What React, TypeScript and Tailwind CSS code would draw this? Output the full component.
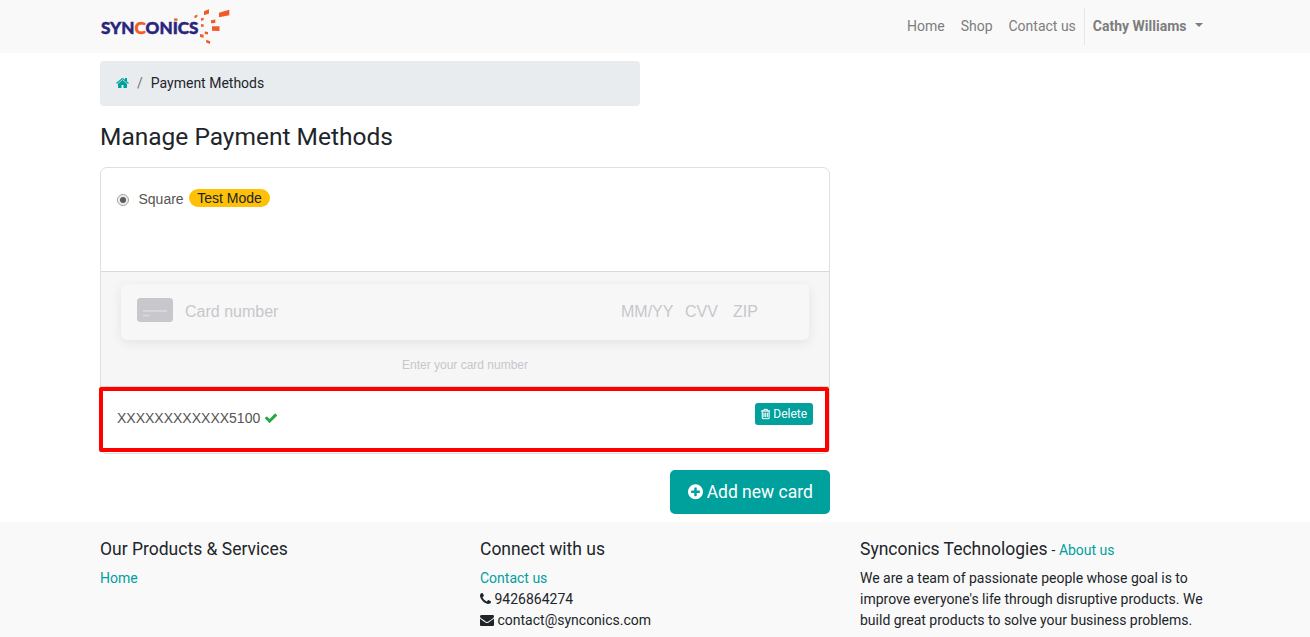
import type { ReactNode } from "react";

const ICONS = {
  home: "M1472 992v480q0 26-19 45t-45 19h-384v-384h-256v384h-384q-26 0-45-19t-19-45v-480q0-1 .5-3t.5-3l575-474 575 474q1 2 1 6zm223-69l-62 74q-8 9-21 11h-3q-13 0-21-7l-692-577-692 577q-12 8-24 7-13-2-21-11l-62-74q-8-10-7-23.5t11-21.5l719-599q32-26 76-26t76 26l244 204v-195q0-14 9-23t23-9h192q14 0 23 9t9 23v408l219 182q10 8 11 21.5t-7 23.5z",
  check: "M1671 566q0 40-28 68l-724 724-136 136q-28 28-68 28t-68-28l-136-136-362-362q-28-28-28-68t28-68l136-136q28-28 68-28t68 28l294 295 656-657q28-28 68-28t68 28l136 136q28 28 28 68z",
  phone: "M1600 1240q0 27-10 70.5t-21 68.5q-21 50-122 106-94 51-186 51-27 0-53-3.5t-57.5-12.5-47-14.5-55.5-20.5-49-18q-98-35-175-83-127-79-264-216t-216-264q-48-77-83-175-3-9-18-49t-20.5-55.5-14.5-47-12.5-57.5-3.5-53q0-92 51-186 56-101 106-122 25-11 68.5-21t70.5-10q14 0 21 3 18 6 53 76 11 19 30 54t35 63.5 31 53.5q3 4 17.5 25t21.5 35.5 7 28.5q0 20-28.5 50t-62 55-62 53-28.5 46q0 9 5 22.5t8.5 20.5 14 24 11.5 19q76 137 174 235t235 174q2 1 19 11.5t24 14 20.5 8.5 22.5 5q18 0 46-28.5t53-62 55-62 50-28.5q14 0 28.5 7t35.5 21.5 25 17.5q25 15 53.5 31t63.5 35 54 30q70 35 76 53 3 7 3 21z",
  envelope: "M1792 710v794q0 66-47 113t-113 47h-1472q-66 0-113-47t-47-113v-794q44 49 101 87 362 246 497 345 57 42 92.5 65.5t94.5 48 110 24.5h2q51 0 110-24.5t94.5-48 92.5-65.5q170-123 498-345 57-39 100-87zm0-294q0 79-49 151t-122 123q-376 261-468 325-10 7-42.5 31t-54 38.5-52 32.5-57.5 27-50 9h-2q-23 0-50-9t-57.5-27-52-32.5-54-38.5-42.5-31q-91-64-262-182.5t-205-142.5q-62-42-117-115.5t-55-136.5q0-78 41.5-130t118.5-52h1472q65 0 112.5 47t47.5 113z",
  plus: "M1344 960v-128q0-26-19-45t-45-19h-256v-256q0-26-19-45t-45-19h-128q-26 0-45 19t-19 45v256h-256q-26 0-45 19t-19 45v128q0 26 19 45t45 19h256v256q0 26 19 45t45 19h128q26 0 45-19t19-45v-256h256q26 0 45-19t19-45zm320-64q0 209-103 385.5t-279.5 279.5-385.5 103-385.5-103-279.5-279.5-103-385.5 103-385.5 279.5-279.5 385.5-103 385.5 103 279.5 279.5 103 385.5z",
  trash: "M704 736v576q0 14-9 23t-23 9h-64q-14 0-23-9t-9-23v-576q0-14 9-23t23-9h64q14 0 23 9t9 23zm256 0v576q0 14-9 23t-23 9h-64q-14 0-23-9t-9-23v-576q0-14 9-23t23-9h64q14 0 23 9t9 23zm256 0v576q0 14-9 23t-23 9h-64q-14 0-23-9t-9-23v-576q0-14 9-23t23-9h64q14 0 23 9t9 23zm128 724v-948h-896v948q0 22 7 40.5t14.5 27 10.5 8.5h832q3 0 10.5-8.5t14.5-27 7-40.5zm-672-1076h448l-48-117q-7-9-17-11h-317q-10 2-17 11zm928 32v64q0 14-9 23t-23 9h-96v948q0 83-47 143.5t-113 60.5h-832q-66 0-113-58.5t-47-141.5v-952h-96q-14 0-23-9t-9-23v-64q0-14 9-23t23-9h309l70-167q15-37 54-63t79-26h320q40 0 79 26t54 63l70 167h309q14 0 23 9t9 23z",
};

function Icon({ name, box = "0 0 1792 1792", className }: { name: keyof typeof ICONS; box?: string; className: string }) {
  return (
    <svg viewBox={box} fill="currentColor" className={className} aria-hidden="true">
      <path d={ICONS[name]} />
    </svg>
  );
}

function Logo() {
  return (
    <svg viewBox="0 0 130 40" className="h-10 w-[130px]" role="img" aria-label="Synconics">
      <text x="1" y="27.300" textLength="97.500" lengthAdjust="spacingAndGlyphs" fontFamily="Lato" fontWeight="900" fontSize="17" fill="#29247c" stroke="#29247c" strokeWidth="0.450">
        SYN<tspan fill="#f15a29" stroke="#f15a29">C</tspan>ONICS
      </text>
      <g fill="#f15a29">
        <path d="M74 11.500h3.600v2.200H74z" />
        <path d="M119 5.800l10.300-3v5.500L119 10.300z" />
        <path d="M104 4.200l5-2v4.400l-5 1.600z" />
        <path d="M94.500 8.800l2.800-1.200v2.400l-2.800 1.200z" />
        <path d="M101 11.300l2.600-.6v2.500l-2.600.5z" />
        <path d="M111 13.200l4.300-.6v3.400l-4.300.3z" />
        <path d="M112 19.300h7.500v4.800l-7.500-.4z" />
        <path d="M101 17.200h2.600v2.600H101z" />
        <path d="M104.700 24.600l3.400.4-.2 2.500-3.200-.4z" />
        <path d="M100 27l3.700.8-.2 2.900-3.500-.8z" />
        <path d="M106.200 32.800l4 1.500-.3 2.600-3.700-1.500z" />
      </g>
    </svg>
  );
}

function FooterColumn({ title, children }: { title: ReactNode; children: ReactNode }) {
  return (
    <div className="px-[15px]">
      <h5 className="mb-2 text-[17.5px] leading-[21px]">{title}</h5>
      {children}
    </div>
  );
}

export default function App() {
  return (
    <div className="flex h-[637px] flex-col overflow-hidden bg-white font-[Roboto,sans-serif] text-sm leading-[21px] text-[#212529]">
      <header className="h-[53px] bg-[#f9f9f9]">
        <div className="mx-auto flex w-[1110px] justify-between pt-[7px]">
          <Logo />
          <nav className="-mr-[0.5px] flex h-[38px] items-center pt-px text-[#7d7d7d]">
            <a className="px-2">Home</a>
            <a className="px-2">Shop</a>
            <a className="px-2">Contact us</a>
            <a className="flex h-[37px] items-center border-l border-[#e7e7e7] px-2 font-bold">
              Cathy Williams
              <span className="mb-[3px] ml-2 border-x-4 border-t-4 border-x-transparent border-t-[#7d7d7d]" />
            </a>
          </nav>
        </div>
      </header>

      <main className="mx-auto h-[469px] w-[1110px] pt-2">
        <nav className="flex h-[45px] w-[540px] items-center rounded bg-[#e9ecef] px-4">
          <Icon name="home" box="64 0 1664 1792" className="mb-[2px] h-[14px] w-[13px] text-[#00a09d]" />
          <span className="px-2 text-[#6c757d]">/</span>
          <span>Payment Methods</span>
        </nav>
        <h3 className="mt-4 mb-4 text-[24.5px] leading-[29px]">Manage Payment Methods</h3>

        <div className="relative w-[730px]">
          <section className="h-[287px] overflow-hidden rounded-[7px] border border-[#dfdfdf] font-['Liberation_Sans',Arial,sans-serif] text-[#555]">
            <div className="flex h-[103px] items-start px-4 pt-[21px]">
              <span className="mt-[5px] flex size-3 items-center justify-center rounded-full border border-[#a5a5a5] bg-[#ececec]">
                <span className="size-1.5 rounded-full bg-[#5c5c5c]" />
              </span>
              <span className="ml-[9.5px]">Square</span>
              <span className="ml-[5.5px] h-[18px] rounded-full bg-[#ffc107] px-2 leading-[18px] text-[#212529]">Test Mode</span>
            </div>
            <div className="h-[116px] border-y border-[#d9d9d9] bg-[#f6f6f6] px-5 pt-3">
              <div className="flex h-14 items-center rounded-md bg-[#f7f7f7] px-4 text-base text-[#c7c7cb] shadow-[0_3px_12px_rgba(0,0,0,0.08)]">
                <svg viewBox="0 0 36 24" className="mb-1 h-6 w-9">
                  <rect width="36" height="24" rx="3.500" fill="#c7c7cc" />
                  <path d="M6 13h24M6 17.500h7" stroke="#dcdcdf" strokeWidth="1.500" />
                </svg>
                <span className="ml-3 flex-1">Card number</span>
                <span className="w-16">MM/YY</span>
                <span className="w-12">CVV</span>
                <span className="w-[60px]">ZIP</span>
              </div>
              <p className="mt-[15px] text-center text-xs leading-[21px] text-[#c7c7cb]">Enter your card number</p>
            </div>
            <div className="flex h-[66px] items-start justify-between px-4 pt-4">
              <span className="mt-[5px] flex items-center">
                XXXXXXXXXXXX5100
                <Icon name="check" className="mb-[2px] ml-1 size-[14px] text-[#28a745]" />
              </span>
              <button className="flex h-[22px] w-[58px] items-center justify-center rounded-[3px] bg-[#00a09d] font-[Roboto,sans-serif] text-xs text-white">
                <Icon name="trash" box="192 0 1408 1792" className="mr-[3px] mb-px h-3 w-[9.4px] stroke-current stroke-[40]" />
                Delete
              </button>
            </div>
          </section>
          <div className="pointer-events-none absolute top-[220px] -left-px h-[65px] w-[730px] rounded-[2px] border-4 border-[#ff0000]" />
        </div>

        <div className="mt-4 flex w-[730px] justify-end">
          <button className="flex h-11 w-40 items-center justify-center rounded-[5px] bg-[#00a09d] pl-[0.5px] text-[17.5px] text-white">
            <Icon name="plus" box="128 0 1536 1792" className="mr-1 h-[17.5px] w-[15px]" />
            Add new card
          </button>
        </div>
      </main>

      <footer className="flex-1 bg-[#f9f9f9] pt-[17px]">
        <div className="mx-auto grid w-[1140px] grid-cols-3">
          <FooterColumn title="Our Products & Services">
            <a className="text-[#00a09d]">Home</a>
          </FooterColumn>
          <FooterColumn title="Connect with us">
            <a className="block text-[#00a09d]">Contact us</a>
            <div className="flex items-center">
              <Icon name="phone" box="192 0 1408 1792" className="mr-[3.5px] mb-[2px] h-[14px] w-[11px]" />
              9426864274
            </div>
            <div className="flex items-center">
              <Icon name="envelope" className="mr-[3.5px] mb-px size-[14px]" />
              contact@synconics.com
            </div>
          </FooterColumn>
          <FooterColumn
            title={
              <>
                Synconics Technologies
                <span className="ml-[0.5px] text-sm leading-none">
                  {" "}- <a className="text-[#00a09d]">About us</a>
                </span>
              </>
            }
          >
            <p>We are a team of passionate people whose goal is to improve everyone's life through disruptive products. We build great products to solve your business problems.</p>
          </FooterColumn>
        </div>
      </footer>
    </div>
  );
}
